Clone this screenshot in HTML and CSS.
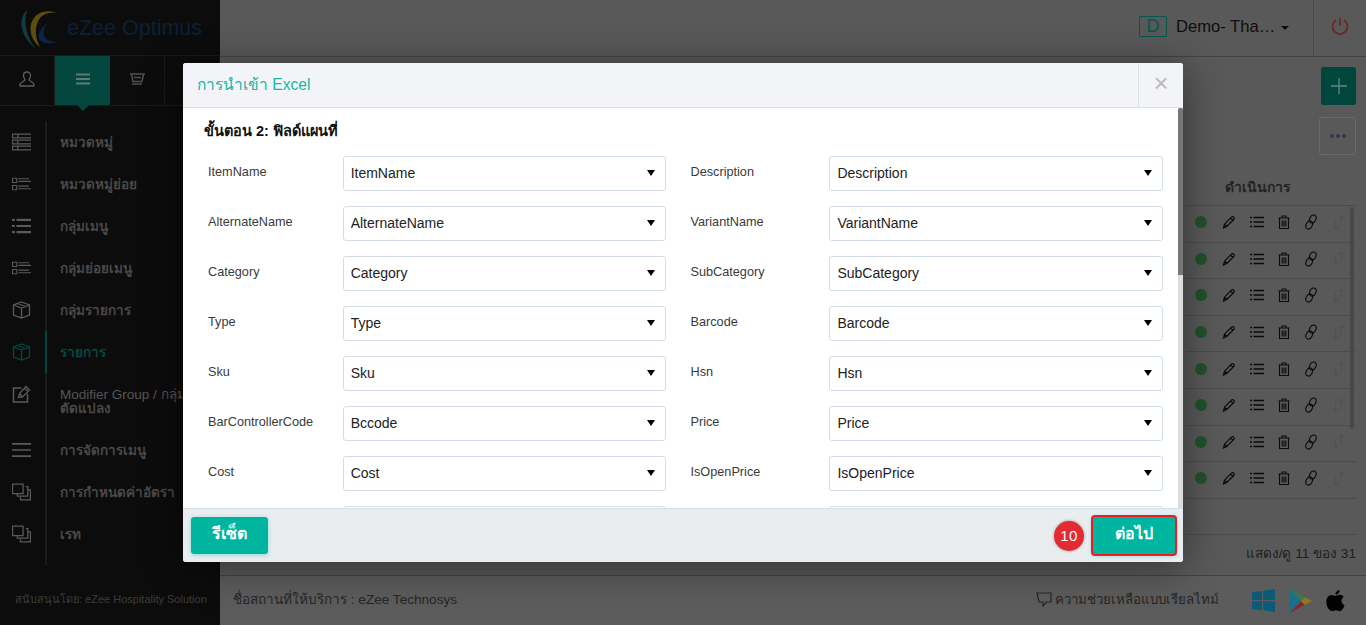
FILE: index.html
```html
<!DOCTYPE html>
<html lang="th">
<head>
<meta charset="utf-8">
<title>eZee Optimus</title>
<link rel="stylesheet" href="styles.css">
</head>
<body>
<svg class="defs" width="0" height="0">
  <symbol id="i-pencil" viewBox="0 0 14 14"><path d="M1.500 13l1-3.800 6.900-7c.7-.7 1.700-.7 2.300 0 .7.6.7 1.600 0 2.300l-7 7L1.500 13zM2.500 9.200l2.200 2.300M8.500 3.200l2.300 2.300M2 11.500l.5 1" fill="none" stroke="currentColor" stroke-width="1.200"/></symbol>
  <symbol id="i-list" viewBox="0 0 14 14"><path d="M3.500 2.500H14M3.500 7H14M3.500 11.500H14M0 2.500h2M0 7h2M0 11.500h2" fill="none" stroke="currentColor" stroke-width="1.400"/></symbol>
  <symbol id="i-trash" viewBox="0 0 12 14"><path d="M.5 3h11M4 3V1h4v2M1.500 3v10.500h9V3M4.200 5.500v6M6 5.500v6M7.800 5.500v6" fill="none" stroke="currentColor" stroke-width="1.100"/></symbol>
  <symbol id="i-link" viewBox="0 0 12 16"><ellipse cx="7.800" cy="5" rx="3" ry="4.300" transform="rotate(28 7.800 5)" fill="none" stroke="currentColor" stroke-width="1.100"/><ellipse cx="4.200" cy="11" rx="3" ry="4.300" transform="rotate(28 4.200 11)" fill="none" stroke="currentColor" stroke-width="1.100"/></symbol>
  <symbol id="i-sort" viewBox="0 0 16 16"><path d="M5 15V5M1.500 11.500L5 15l3.500-3.500M11 11V1M7.500 4.500L11 1l3.500 3.500" fill="none" stroke="currentColor" stroke-width="1"/></symbol>
  <symbol id="i-rows" viewBox="0 0 18 16"><path d="M.5.500h18v3.500H.500zM.5 6.200h18v3.500H.500zM.5 12h18v3.500H.500zM5.500.5v3.500M5.500 6.200v3.500M5.500 12v3.500" fill="none" stroke="currentColor" stroke-width="1.200"/></symbol>
  <symbol id="i-sub" viewBox="0 0 18 14"><path d="M.5 1.500h4v4h-4zM.5 8.500h4v4h-4zM6 2h10M6 4.500h12M6 9h10M6 11.500h12" fill="none" stroke="currentColor" stroke-width="1"/></symbol>
  <symbol id="i-lines" viewBox="0 0 17 14"><path d="M4 1.500h13M4 7h13M4 12.500h13M0 1.500h2.500M0 7h2.500M0 12.500h2.500" fill="none" stroke="currentColor" stroke-width="2"/></symbol>
  <symbol id="i-menu" viewBox="0 0 17 14"><path d="M0 1.500h17M0 7h17M0 12.500h17" fill="none" stroke="currentColor" stroke-width="1.500"/></symbol>
  <symbol id="i-box" viewBox="0 0 18 18"><path d="M9 1l8 3v10l-8 3-8-3V4zM1 4l8 3 8-3M9 7v10M5 2.500l8 3" fill="none" stroke="currentColor" stroke-width="1.300"/></symbol>
  <symbol id="i-edit" viewBox="0 0 18 18"><path d="M9 3H1v14h14V9" fill="none" stroke="currentColor" stroke-width="1.500"/><path d="M6 12.500l1-4L13.500 1.500 17 5l-7 7zM7 8.500l3 3.500M12 3l3.500 3.500" fill="none" stroke="currentColor" stroke-width="1.300"/></symbol>
  <symbol id="i-copy" viewBox="0 0 18 16"><path d="M.5.500h10v9H.500zM13 3h2v9H5v-2M15.500 6h2v9.500H8V13" fill="none" stroke="currentColor" stroke-width="1.200"/></symbol>
</svg>

<div class="app">
  <aside class="sidebar">
    <div class="logo">
      <svg class="logo-mark" width="42" height="42" viewBox="0 0 42 42">
        <path d="M9 3C1 10 0 27 18 42 9 32 5 15 9 3z" fill="#0f3d42"/>
        <path d="M39 6C28 2 17 5 13 17c-2 9 2 18 9 23-5-9-6-21 0-29 4-5 10-6 17-5z" fill="#5c4e0e"/>
        <path d="M31 15c-7 4-12 12-10 17 3 5 11 5 19 3-7 0-13-2-14-7-1-5 1-9 5-13z" fill="#0e2146"/>
      </svg>
      <span class="logo-text">eZee Optimus</span>
    </div>
    <div class="tabs">
      <div class="tab">
        <svg width="16" height="16" viewBox="0 0 16 16"><path d="M8 1c-2.200 0-3.500 1.600-3.500 3.500S5.800 8 6 9c0 1-5 2-5 4.500V15h14v-1.500C15 11 10 10 10 9c.2-1 1.500-2.600 1.500-4.500S10.200 1 8 1z" fill="none" stroke="#5c5c5c" stroke-width="1.300"/></svg>
      </div>
      <div class="tab tab-active">
        <svg width="14" height="12" viewBox="0 0 14 12"><path d="M0 1.500h14M0 6h14M0 10.500h14" stroke="#5d7c76" stroke-width="2"/></svg>
      </div>
      <div class="tab tab-cart">
        <svg width="15" height="12" viewBox="0 0 15 12"><path d="M0 1h15M1.500 1l1.500 7.500h9L13.500 1M2 11h10M4 4.500h7" fill="none" stroke="#4f4f4f" stroke-width="1.500"/></svg>
      </div>
      <div class="tab"></div>
    </div>
    <nav class="menu">
      <a class="menu-item"><svg class="menu-icon"><use href="#i-rows"/></svg><span class="menu-label">หมวดหมู่</span></a>
      <a class="menu-item"><svg class="menu-icon"><use href="#i-sub"/></svg><span class="menu-label">หมวดหมู่ย่อย</span></a>
      <a class="menu-item"><svg class="menu-icon"><use href="#i-lines"/></svg><span class="menu-label">กลุ่มเมนู</span></a>
      <a class="menu-item"><svg class="menu-icon"><use href="#i-sub"/></svg><span class="menu-label">กลุ่มย่อยเมนู</span></a>
      <a class="menu-item"><svg class="menu-icon"><use href="#i-box"/></svg><span class="menu-label">กลุ่มรายการ</span></a>
      <a class="menu-item menu-item-active"><svg class="menu-icon"><use href="#i-box"/></svg><span class="menu-label">รายการ</span></a>
      <a class="menu-item menu-item-tall"><svg class="menu-icon"><use href="#i-edit"/></svg><span class="menu-label"><span class="menu-latin">Modifier Group / กลุ่ม</span><br>ตัดแปลง</span></a>
      <a class="menu-item"><svg class="menu-icon"><use href="#i-menu"/></svg><span class="menu-label">การจัดการเมนู</span></a>
      <a class="menu-item"><svg class="menu-icon"><use href="#i-copy"/></svg><span class="menu-label">การกำหนดค่าอัตรา</span></a>
      <a class="menu-item"><svg class="menu-icon"><use href="#i-copy"/></svg><span class="menu-label">เรท</span></a>
    </nav>
    <div class="powered">สนับสนุนโดย: eZee Hospitality Solution</div>
  </aside>

  <div class="main">
    <header class="topbar">
      <span class="d-box">D</span>
      <span class="property">Demo- Tha…</span>
      <span class="caret"></span>
      <div class="power">
        <svg width="18" height="18" viewBox="0 0 18 18"><path d="M9 1v8M5 3.200a7.500 7.500 0 1 0 8 0" fill="none" stroke="#6e2626" stroke-width="1.800"/></svg>
      </div>
    </header>

    <section class="content">
      <div class="tools">
        <div class="btn-add">
          <svg width="16" height="16" viewBox="0 0 16 16"><path d="M8 0v16M0 8h16" stroke="#5f8a82" stroke-width="1.300"/></svg>
        </div>
        <div class="btn-more">
          <svg width="16" height="4" viewBox="0 0 16 4"><circle cx="2" cy="2" r="2" fill="#33384a"/><circle cx="8" cy="2" r="2" fill="#33384a"/><circle cx="14" cy="2" r="2" fill="#33384a"/></svg>
        </div>
      </div>
      <div class="table-head">ดำเนินการ</div>
      <div class="table">
        <div class="table-scroll"></div>
        <div class="row"><span class="dot"></span><svg class="a a-pencil"><use href="#i-pencil"/></svg><svg class="a a-list"><use href="#i-list"/></svg><svg class="a a-trash"><use href="#i-trash"/></svg><svg class="a a-link"><use href="#i-link"/></svg><svg class="a a-sort"><use href="#i-sort"/></svg></div>
        <div class="row"><span class="dot"></span><svg class="a a-pencil"><use href="#i-pencil"/></svg><svg class="a a-list"><use href="#i-list"/></svg><svg class="a a-trash"><use href="#i-trash"/></svg><svg class="a a-link"><use href="#i-link"/></svg><svg class="a a-sort"><use href="#i-sort"/></svg></div>
        <div class="row"><span class="dot"></span><svg class="a a-pencil"><use href="#i-pencil"/></svg><svg class="a a-list"><use href="#i-list"/></svg><svg class="a a-trash"><use href="#i-trash"/></svg><svg class="a a-link"><use href="#i-link"/></svg><svg class="a a-sort"><use href="#i-sort"/></svg></div>
        <div class="row"><span class="dot"></span><svg class="a a-pencil"><use href="#i-pencil"/></svg><svg class="a a-list"><use href="#i-list"/></svg><svg class="a a-trash"><use href="#i-trash"/></svg><svg class="a a-link"><use href="#i-link"/></svg><svg class="a a-sort"><use href="#i-sort"/></svg></div>
        <div class="row"><span class="dot"></span><svg class="a a-pencil"><use href="#i-pencil"/></svg><svg class="a a-list"><use href="#i-list"/></svg><svg class="a a-trash"><use href="#i-trash"/></svg><svg class="a a-link"><use href="#i-link"/></svg><svg class="a a-sort"><use href="#i-sort"/></svg></div>
        <div class="row"><span class="dot"></span><svg class="a a-pencil"><use href="#i-pencil"/></svg><svg class="a a-list"><use href="#i-list"/></svg><svg class="a a-trash"><use href="#i-trash"/></svg><svg class="a a-link"><use href="#i-link"/></svg><svg class="a a-sort"><use href="#i-sort"/></svg></div>
        <div class="row"><span class="dot"></span><svg class="a a-pencil"><use href="#i-pencil"/></svg><svg class="a a-list"><use href="#i-list"/></svg><svg class="a a-trash"><use href="#i-trash"/></svg><svg class="a a-link"><use href="#i-link"/></svg><svg class="a a-sort"><use href="#i-sort"/></svg></div>
        <div class="row"><span class="dot"></span><svg class="a a-pencil"><use href="#i-pencil"/></svg><svg class="a a-list"><use href="#i-list"/></svg><svg class="a a-trash"><use href="#i-trash"/></svg><svg class="a a-link"><use href="#i-link"/></svg><svg class="a a-sort"><use href="#i-sort"/></svg></div>
        <div class="row row-empty"></div>
      </div>
      <div class="pager">แสดง/ดู 11 ของ 31</div>
    </section>

    <footer class="footer">
      <span class="venue">ชื่อสถานที่ให้บริการ : eZee Technosys</span>
      <span class="help">
        <svg width="16" height="15" viewBox="0 0 16 15"><path d="M1 1h14v9h-4.500L7 14v-4H3L1 1z" fill="none" stroke="#262626" stroke-width="1.200"/></svg>
        ความช่วยเหลือแบบเรียลไทม์
      </span>
      <svg class="store store-win" width="23" height="23" viewBox="0 0 24 24"><path d="M0 3.500l10.500-1.500v9.500H0zM11.700 1.800L24 0v11.500H11.700zM0 12.700h10.500v9.600L0 20.800zM11.700 12.700H24V24l-12.300-1.800z" fill="#0a5a78"/></svg>
      <svg class="store store-play" width="24" height="26" viewBox="0 0 26 26"><path d="M1 0l12 13L1 26z" fill="#1c6f88"/><path d="M1 0l16 9-4 4z" fill="#37794f"/><path d="M1 26l16-9-4-4z" fill="#82292c"/><path d="M17 9l8 4-8 4-4-4z" fill="#94791b"/></svg>
      <svg class="store store-apple" width="19" height="22" viewBox="0 0 20 24"><path d="M14.500 0c.2 2.500-2 5-4.500 5C9.700 2.500 12 .3 14.500 0zM10 6.500c1 0 2.500-1.300 4.700-1.300 1.700 0 3.300.9 4.300 2.400-3.700 2.200-3 7.300.9 8.900-1.300 3.200-3.200 6.500-5.400 6.500-1.400 0-2.200-1-4-1s-2.700 1-4 1C3 23 0 17.500 0 13 0 8.500 2.700 5.500 5.800 5.500 7.500 5.500 9 6.500 10 6.500z" fill="#000"/></svg>
    </footer>
  </div>
</div>

<div class="modal">
  <div class="modal-head">
    <h2 class="modal-title">การนำเข้า Excel</h2>
    <div class="modal-close">×</div>
  </div>
  <div class="modal-body">
    <div class="modal-inner">
      <h3 class="step">ขั้นตอน 2: ฟิลด์แผนที่</h3>
      <div class="grid">
        <div class="field"><label class="field-label">ItemName</label><div class="select-wrap"><select class="select"><option>ItemName</option></select></div></div>
        <div class="field"><label class="field-label">Description</label><div class="select-wrap"><select class="select"><option>Description</option></select></div></div>
        <div class="field"><label class="field-label">AlternateName</label><div class="select-wrap"><select class="select"><option>AlternateName</option></select></div></div>
        <div class="field"><label class="field-label">VariantName</label><div class="select-wrap"><select class="select"><option>VariantName</option></select></div></div>
        <div class="field"><label class="field-label">Category</label><div class="select-wrap"><select class="select"><option>Category</option></select></div></div>
        <div class="field"><label class="field-label">SubCategory</label><div class="select-wrap"><select class="select"><option>SubCategory</option></select></div></div>
        <div class="field"><label class="field-label">Type</label><div class="select-wrap"><select class="select"><option>Type</option></select></div></div>
        <div class="field"><label class="field-label">Barcode</label><div class="select-wrap"><select class="select"><option>Barcode</option></select></div></div>
        <div class="field"><label class="field-label">Sku</label><div class="select-wrap"><select class="select"><option>Sku</option></select></div></div>
        <div class="field"><label class="field-label">Hsn</label><div class="select-wrap"><select class="select"><option>Hsn</option></select></div></div>
        <div class="field"><label class="field-label">BarControllerCode</label><div class="select-wrap"><select class="select"><option>Bccode</option></select></div></div>
        <div class="field"><label class="field-label">Price</label><div class="select-wrap"><select class="select"><option>Price</option></select></div></div>
        <div class="field"><label class="field-label">Cost</label><div class="select-wrap"><select class="select"><option>Cost</option></select></div></div>
        <div class="field"><label class="field-label">IsOpenPrice</label><div class="select-wrap"><select class="select"><option>IsOpenPrice</option></select></div></div>
        <div class="field"><label class="field-label"></label><div class="select-wrap"><select class="select"></select></div></div>
        <div class="field"><label class="field-label"></label><div class="select-wrap"><select class="select"></select></div></div>
      </div>
    </div>
    <div class="scrollbar"><div class="scrollbar-thumb"></div></div>
  </div>
  <div class="modal-foot">
    <button class="btn">รีเซ็ต</button>
    <span class="badge">10</span>
    <button class="btn btn-next">ต่อไป</button>
  </div>
</div>
</body>
</html>
```

FILE: styles.css
```css
* { box-sizing: border-box; }
html, body { margin: 0; padding: 0; height: 100%; overflow: hidden; }
body { font-family: "Liberation Sans", Arial, "Noto Sans", sans-serif; font-size: 14px; color: #1a1a1a; background: #595959; }
.defs { position: absolute; }
.app { display: flex; height: 625px; }

/* sidebar */
.sidebar { width: 220px; flex: none; background: #0c0c0c; display: flex; flex-direction: column; }
.logo { height: 56px; display: flex; align-items: center; padding: 7px 0 0 18px; border-bottom: 1px solid #1a1a1a; }
.logo-mark { flex: none; margin-top: -6px; }
.logo-text { font-size: 21.500px; color: #0b2036; margin-left: 7px; margin-top: -5px; }
.tabs { display: flex; height: 50px; border-bottom: 1px solid #1a1a1a; }
.tab { width: 55px; display: flex; align-items: center; justify-content: center; border-right: 1px solid #1a1a1a; padding-bottom: 3px; }
.tab-cart { padding-left: 1px; padding-bottom: 4px; }
.tab-active { background: #03473e; position: relative; border-right: 0; }
.tab-active::after { content: ""; position: absolute; left: 22px; top: 100%; border: 6px solid transparent; border-top-color: #03473e; border-bottom: 0; }
.menu { margin: 15px 0 0 0; flex: 1; display: flex; flex-direction: column; position: relative; }
.menu::before { content: ""; position: absolute; left: 45px; top: 0; bottom: 0; width: 2px; background: #1c1c1c; }
.menu-item { display: flex; align-items: center; height: 42px; position: relative; flex: none; }
.menu-item-tall { height: 56px; }
.menu-item-tall .menu-icon { align-self: flex-start; margin-top: 12px; }
.menu-icon { width: 19px; height: 18px; margin-left: 12px; color: #5a5a5a; flex: none; }
.menu-label { margin-left: 29px; padding-top: 2px; font-size: 13.500px; font-weight: 700; color: #484848; line-height: 14px; white-space: nowrap; }
.menu-latin { font-weight: 400; color: #555; }
.menu-item-active::before { content: ""; position: absolute; left: 45px; top: 0; bottom: 0; width: 2px; background: #03473e; }
.menu-item-active .menu-icon { color: #04483f; }
.menu-item-active .menu-label { color: #04483f; }
.powered { height: 60px; flex: none; padding: 25px 0 0 15px; font-size: 11px; color: #3c3c3c; white-space: nowrap; }

/* main */
.main { flex: 1; min-width: 0; display: flex; flex-direction: column; }
.topbar { height: 57px; flex: none; display: flex; align-items: center; padding-left: 919px; border-bottom: 1px solid #434343; }
.d-box { width: 28px; height: 21px; border: 1px solid #04584d; color: #04584d; font-size: 18px; display: flex; align-items: center; justify-content: center; margin-bottom: 3px; border-radius: 1px; }
.property { margin-left: 9px; font-size: 16.600px; color: #0e0e0e; margin-bottom: 2px; white-space: nowrap; }
.caret { margin-left: 6px; border: 4px solid transparent; border-top-color: #0e0e0e; border-bottom: 0; margin-bottom: 1px; }
.power { margin-left: auto; width: 53px; height: 56px; border-left: 1px solid #4a4a4a; display: flex; align-items: center; justify-content: center; padding-bottom: 4px; }
.content { flex: 1; position: relative; padding: 10px 10px 0 0; display: flex; flex-direction: column; align-items: flex-end; }
.tools { display: flex; flex-direction: column; align-items: flex-end; gap: 12px; }
.btn-add { width: 35px; height: 38px; background: #00463c; border-radius: 2px; display: flex; align-items: center; justify-content: center; }
.btn-more { width: 37px; height: 38px; border: 1px solid #6a6a6a; border-radius: 3px; display: flex; align-items: center; justify-content: center; }
.table-head { width: 131px; margin-top: 21px; height: 29px; font-size: 14px; font-weight: 700; color: #232323; white-space: nowrap; }
.table { width: 170px; position: relative; border-top: 1px solid #4c4c4c; }
.table-scroll { position: absolute; right: 2px; top: 1px; width: 4px; height: 222px; background: #484848; border-radius: 2px; }
.row { height: 36.600px; display: flex; align-items: center; border-bottom: 1px solid #4c4c4c; color: #0a0a0a; padding-bottom: 3px; }
.dot { width: 12px; height: 12px; border-radius: 50%; background: #20522a; margin-left: 9px; flex: none; }
.a { flex: none; }
.a-pencil { width: 14px; height: 14px; margin-left: 15px; }
.a-list { width: 14px; height: 14px; margin-left: 14px; }
.a-trash { width: 12px; height: 14px; margin-left: 14px; }
.a-link { width: 12px; height: 16px; margin-left: 15px; }
.a-sort { width: 15px; height: 15px; margin-left: 14px; color: #505050; }
.pager { position: absolute; right: 10px; top: 485px; font-size: 13.600px; color: #202020; white-space: nowrap; }

/* footer */
.footer { height: 50px; flex: none; border-top: 1px solid #434343; display: flex; align-items: center; padding: 0 21px 0 13px; background: #5c5c5c; }
.venue { font-size: 13.600px; color: #262626; white-space: nowrap; padding-bottom: 3px; }
.help { margin-left: auto; font-size: 13.300px; color: #262626; display: flex; align-items: center; gap: 3px; white-space: nowrap; padding-bottom: 3px; }
.store { flex: none; }
.store-win { margin-left: 33px; }
.store-play { margin-left: 14px; }
.store-apple { margin-left: 13px; }

/* modal */
.modal { position: absolute; left: 183px; top: 63px; width: 1000px; height: 499px; background: #fff; border-radius: 3px; overflow: hidden; display: flex; flex-direction: column; box-shadow: 0 5px 40px rgba(0,0,0,.45); }
.modal-head { height: 45px; flex: none; background: #f2f4f8; border-bottom: 1px solid #dbe1e8; display: flex; align-items: stretch; }
.modal-title { margin: 0; flex: 1; font-size: 15.600px; font-weight: 400; color: #18b7a6; padding: 9px 0 0 14px; }
.modal-close { width: 45px; border-left: 1px solid #dbe1e8; color: #bbb; font-size: 26px; line-height: 40px; text-align: center; font-weight: 400; }
.modal-body { flex: 1; min-height: 0; overflow: hidden; position: relative; }
.scrollbar { position: absolute; right: 0; top: 0; bottom: 0; width: 5px; background: #dcdcdc; }
.scrollbar-thumb { height: 167px; background: #767676; border-radius: 2px 2px 0 0; }
.modal-inner { min-height: 958px; padding: 15px 15px 0 21px; }
.step { margin: 0 0 16px; font-size: 14.500px; font-weight: 700; line-height: 17px; color: #111; }
.grid { display: grid; grid-template-columns: 458px 472.500px; column-gap: 24.500px; row-gap: 15px; margin-left: 4px; }
.field { display: flex; align-items: flex-start; height: 35px; }
.field-label { width: 29.400%; flex: none; font-size: 12.700px; line-height: 15px; padding-top: 9px; color: #3a3a3a; white-space: nowrap; }
.select-wrap { flex: 1; position: relative; }
.select-wrap::after { content: ""; position: absolute; right: 11px; top: 14px; border: 4px solid transparent; border-top: 6px solid #000; border-bottom: 0; pointer-events: none; }
.select { appearance: none; -webkit-appearance: none; width: 100%; height: 35px; border: 1px solid #d3dde8; border-radius: 3px; background: #fff; font: 14px "Liberation Sans", Arial, sans-serif; color: #222; padding: 0 7px 2px; display: block; }
.modal-foot { height: 54px; flex: none; background: #e9edf0; border-top: 1px solid #d5dde6; display: flex; align-items: center; padding: 0 7px 0 8px; }
.btn { height: 37px; width: 77px; border: 0; border-radius: 3px; background: #00b5a0; color: #fff; font: 700 16px "Liberation Sans", Arial, sans-serif; box-shadow: 0 1px 4px rgba(0,181,160,.4); padding: 0 0 4px; }
.btn-next { width: 84px; height: 39px; outline: 2px solid #ee1c25; outline-offset: -1px; }
.badge { margin-left: auto; margin-right: 8px; width: 30px; height: 30px; border-radius: 50%; background: #e32b33; color: #fff; font-size: 15px; letter-spacing: .5px; display: flex; align-items: center; justify-content: center; box-shadow: 0 0 3px rgba(0,0,0,.4); }
```
